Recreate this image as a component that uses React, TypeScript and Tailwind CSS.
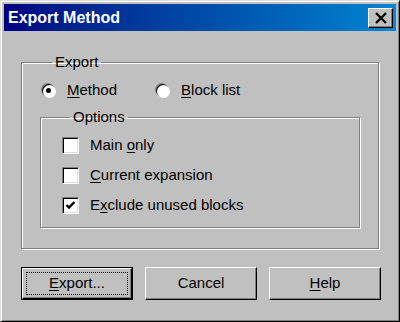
import React from 'react';

const U = ({ children }: { children: React.ReactNode }) => <span className="underline underline-offset-2">{children}</span>;

const Radio = ({ checked, label }: { checked?: boolean; label: React.ReactNode }) => (
  <div className="flex items-center h-[18px]">
    <div className="w-[13px] h-[13px] rounded-full bg-white flex items-center justify-center shadow-[inset_1px_1px_0_#000,-1px_-1px_0_#808080,1px_1px_0_#fff]">
      {checked && <div className="w-[5px] h-[5px] rounded-full bg-black" />}
    </div>
    <span className="ml-[12px]">{label}</span>
  </div>
);

const Check = ({ checked, label }: { checked?: boolean; label: React.ReactNode }) => (
  <div className="flex items-center h-[17px]">
    <div className="w-[17px] h-[17px] bg-white border border-t-[#808080] border-l-[#808080] border-b-white border-r-white shadow-[inset_1px_1px_0_#000,inset_-1px_-1px_0_#dfdfdf] flex items-center justify-center">
      {checked && (
        <svg width="11" height="11" viewBox="0 0 11 11">
          <path d="M1.5 5 L4 7.5 L9.5 2" stroke="#000" strokeWidth="2.4" fill="none" />
        </svg>
      )}
    </div>
    <span className="ml-[11px]">{label}</span>
  </div>
);

const Button = ({ children, isDefault }: { children: React.ReactNode; isDefault?: boolean }) =>
  isDefault ? (
    <div className="w-[112px] h-[33px] border border-black">
      <div className="h-full border border-t-white border-l-white border-b-black border-r-black shadow-[inset_-1px_-1px_0_#808080] p-[3px]">
        <div className="h-full border border-dotted border-black flex items-center justify-center">{children}</div>
      </div>
    </div>
  ) : (
    <div className="w-[112px] h-[33px] border border-t-white border-l-white border-b-black border-r-black shadow-[inset_-1px_-1px_0_#808080] flex items-center justify-center">
      {children}
    </div>
  );

export default function App() {
  return (
    <div className="w-[400px] h-[322px] bg-[#c0c0c0] border border-t-[#dfdfdf] border-l-[#dfdfdf] border-r-black border-b-black shadow-[inset_1px_1px_0_#fff,inset_-1px_-1px_0_#808080] p-[3px] font-['Liberation_Sans',Arial,sans-serif] text-[15px] text-black">
      <div className="h-[27px] flex items-center justify-between bg-gradient-to-r from-[#000080] to-[#1084d0]">
        <span className="pl-[4px] text-white font-bold text-[16px]">Export Method</span>
        <div className="w-[25px] h-[20px] mr-[3px] bg-[#c0c0c0] border border-t-white border-l-white border-b-black border-r-black shadow-[inset_-1px_-1px_0_#808080] flex items-center justify-center">
          <svg width="14" height="12" viewBox="0 0 14 12">
            <path d="M2 1 L12 11 M12 1 L2 11" stroke="#000" strokeWidth="2.4" />
          </svg>
        </div>
      </div>

      <fieldset className="mt-[22px] mx-[17px] border border-[#808080] shadow-[1px_1px_0_#fff,inset_1px_1px_0_#fff] pl-[20px] pr-[18px] pb-[20px]">
        <legend className="ml-[10px] px-[3px] leading-[18px]">Export</legend>
        <div className="flex items-center pt-[10px]">
          <Radio checked label={<><U>M</U>ethod</>} />
          <div className="ml-[39px]">
            <Radio label={<><U>B</U>lock list</>} />
          </div>
        </div>
        <fieldset className="mt-[9px] -ml-[2px] border border-[#808080] shadow-[1px_1px_0_#fff,inset_1px_1px_0_#fff] pl-[21px] pb-[13px]">
          <legend className="ml-[8px] px-[3px] leading-[18px]">Options</legend>
          <div className="flex flex-col gap-[13px] pt-[11px]">
            <Check label={<>Main <U>o</U>nly</>} />
            <Check label={<><U>C</U>urrent expansion</>} />
            <Check checked label={<>E<U>x</U>clude unused blocks</>} />
          </div>
        </fieldset>
      </fieldset>

      <div className="mt-[18px] ml-[17px] flex gap-[12px]">
        <Button isDefault><span><U>E</U>xport...</span></Button>
        <Button>Cancel</Button>
        <Button><span><U>H</U>elp</span></Button>
      </div>
    </div>
  );
}
